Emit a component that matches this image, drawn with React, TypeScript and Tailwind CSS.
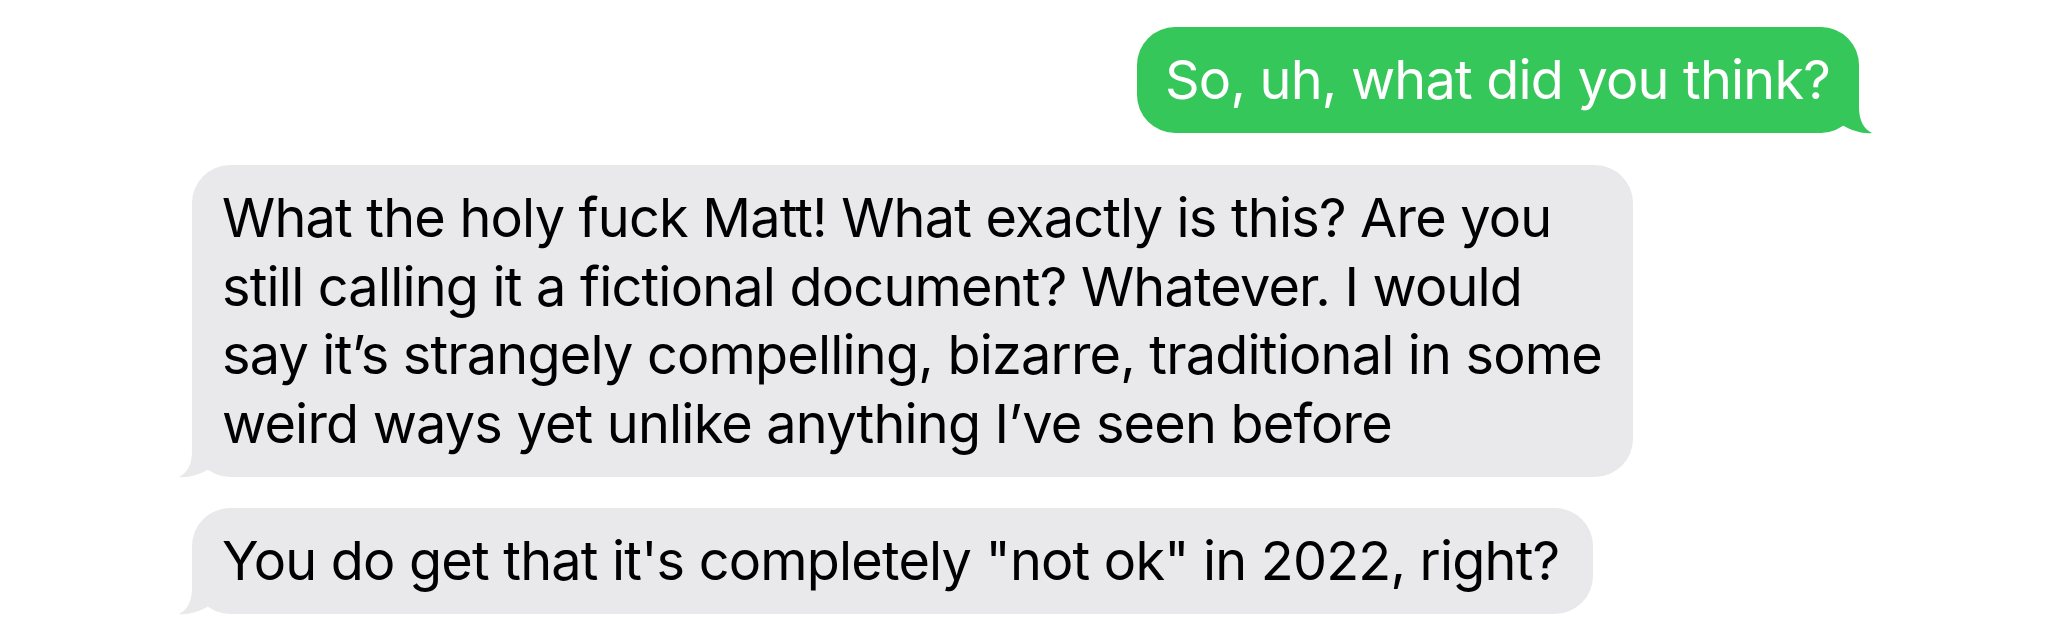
export default function App() {
  return (
    <div
      className="w-[2048px] h-[627px] bg-white overflow-hidden flex flex-col pt-[27px]"
      style={{ fontFamily: "Inter, 'Noto Sans', sans-serif" }}
    >
      <div className="flex justify-end pr-[189px]">
        <div className="relative w-[722px] h-[106px] rounded-[38px] bg-[#35c759] text-white px-[28px] py-[19px] text-[54px] leading-[68px] tracking-[-0.8px] whitespace-nowrap">
          So, uh, what did you think?
          <svg
            className="absolute -right-[13px] bottom-0 overflow-visible"
            width="42"
            height="40"
            viewBox="0 0 42 40"
          >
            <path
              d="M29 0 L29 14 C29 28 34 36 42 40 C34 41 22 38 12 32 L0 20 L0 0 Z"
              fill="#35c759"
            />
          </svg>
        </div>
      </div>

      <div className="flex pl-[192px] mt-[32px]">
        <div className="relative w-[1441px] h-[312px] rounded-[38px] bg-[#e9e9eb] text-black px-[30px] py-[19px] text-[54px] leading-[68.5px] tracking-[-0.8px] whitespace-nowrap">
          What the holy fuck Matt! What exactly is this? Are you
          <br />
          still calling it a fictional document? Whatever. I would
          <br />
          say it’s strangely compelling, bizarre, traditional in some
          <br />
          weird ways yet unlike anything I’ve seen before
          <svg
            className="absolute -left-[13px] bottom-0 overflow-visible"
            width="42"
            height="40"
            viewBox="0 0 42 40"
          >
            <path
              d="M13 0 L13 14 C13 28 8 36 0 40 C8 41 20 38 30 32 L42 20 L42 0 Z"
              fill="#e9e9eb"
            />
          </svg>
        </div>
      </div>

      <div className="flex pl-[192px] mt-[31px]">
        <div className="relative w-[1401px] h-[106px] rounded-[38px] bg-[#e9e9eb] text-black px-[30px] py-[19px] text-[54px] leading-[68px] tracking-[-0.8px] whitespace-nowrap">
          You do get that it's completely "not ok" in 2022, right?
          <svg
            className="absolute -left-[13px] bottom-0 overflow-visible"
            width="42"
            height="40"
            viewBox="0 0 42 40"
          >
            <path
              d="M13 0 L13 14 C13 28 8 36 0 40 C8 41 20 38 30 32 L42 20 L42 0 Z"
              fill="#e9e9eb"
            />
          </svg>
        </div>
      </div>
    </div>
  );
}
